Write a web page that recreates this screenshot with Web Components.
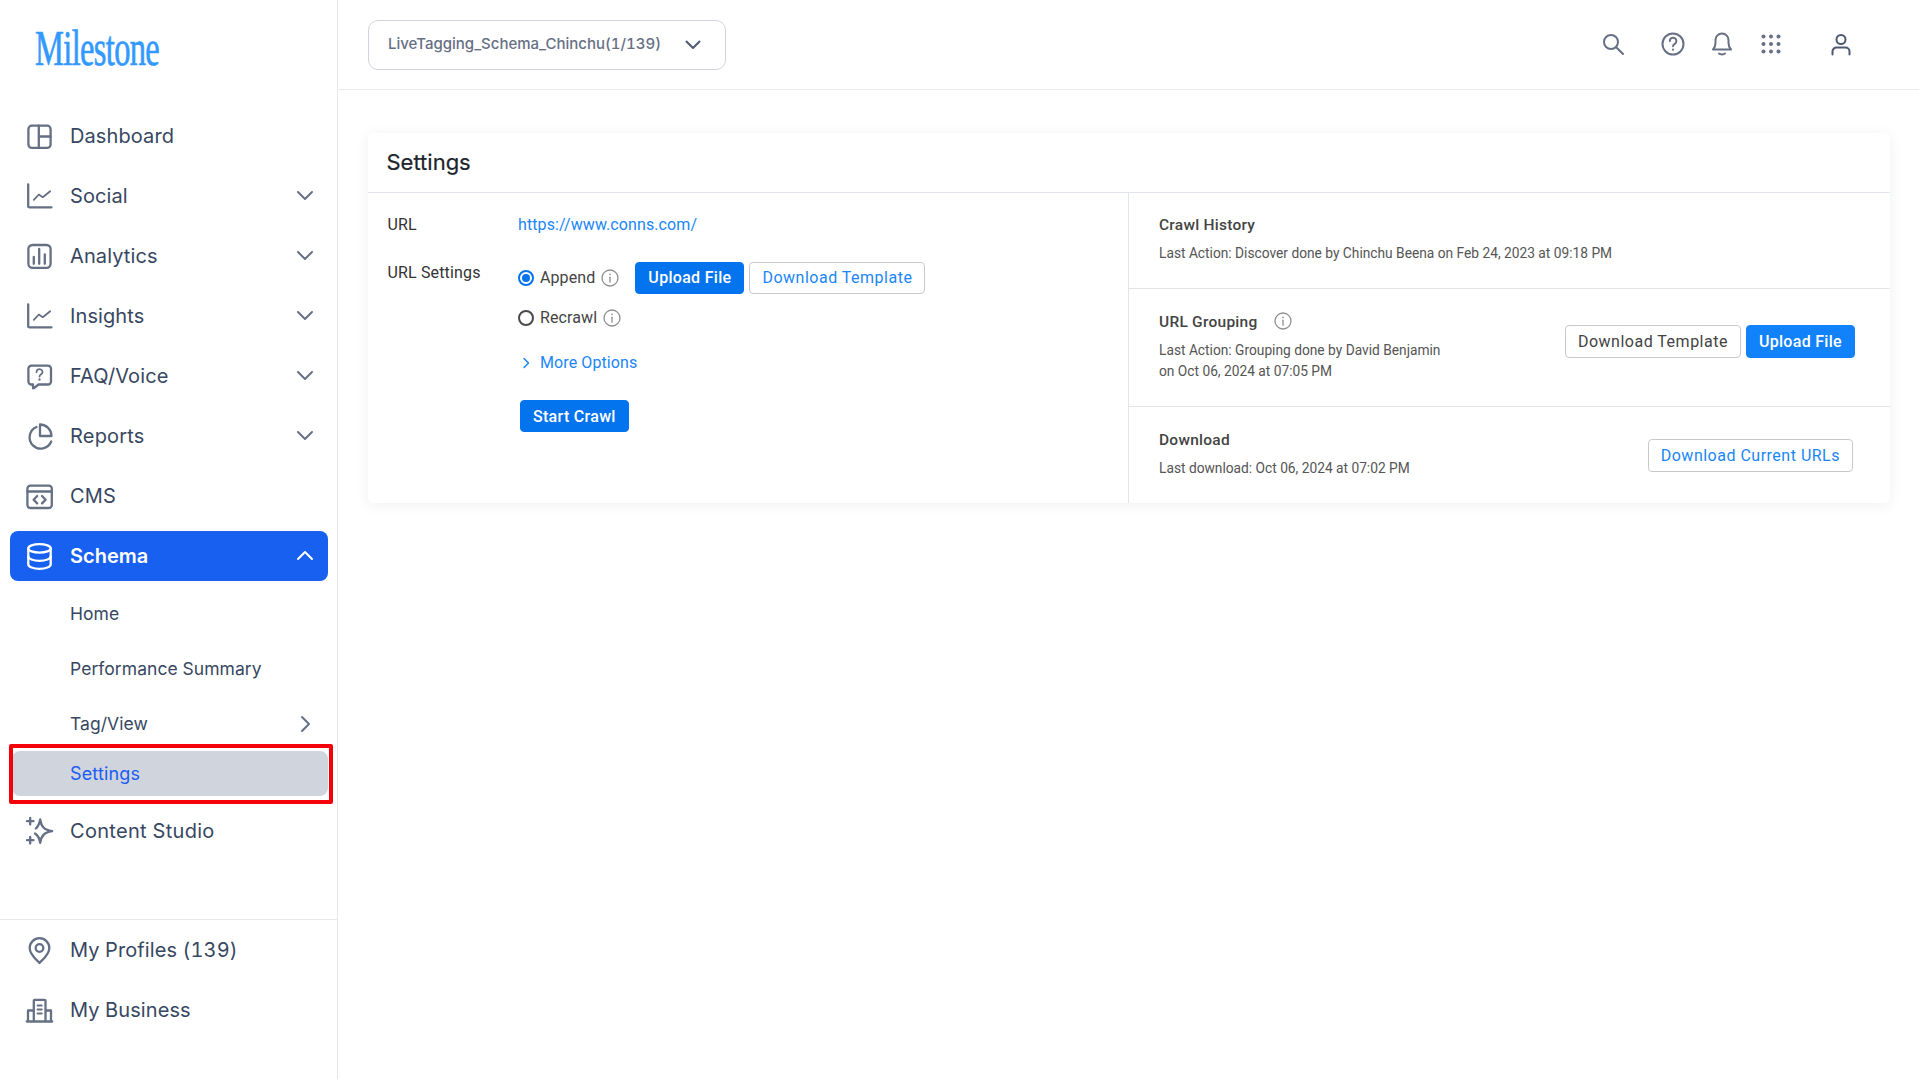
<!DOCTYPE html>
<html>
<head>
<meta charset="utf-8">
<title>Settings</title>
<style>
    html, body { margin: 0; height: 100%; background: #fff; }
    body { display: flex; height: 1079px; overflow: hidden; font-family: 'Inter', sans-serif; }
    app-main { flex: 1; min-width: 0; }
</style>
</head>
<body>
<app-sidebar></app-sidebar>
<app-main>
    <app-topbar></app-topbar>
    <settings-card></settings-card>
</app-main>

<script>
// icons used by the sidebar
const ICONS = {
    dashboard: '<rect x="2.400" y="2.700" width="22.200" height="22.200" rx="3.500"/><path d="M12.800 2.700v22.200M12.800 13.500h11.800"/>',
    chart: '<path d="M2.200 1.500v21.800a1 1 0 0 0 1 1h22.300"/><path stroke-width="1.800" d="M7.800 16.800l5-5.300 4 2.700 7.400-6"/>',
    bars: '<rect x="2.400" y="2" width="22.200" height="22.800" rx="4"/><path d="M7.800 20.800V14M13.200 20.800V5.800M18.800 20.800v-9.300"/>',
    faq: '<path d="M5.400 2.700h16.600a3 3 0 0 1 3 3v12.800a3 3 0 0 1-3 3H12.500l-4.500 3.700c-.5.400-1 .1-1-.4v-3.300H5.400a3 3 0 0 1-3-3V5.700a3 3 0 0 1 3-3z"/><path stroke-width="1.800" d="M10.500 9a3 2.800 0 1 1 4.600 2.300c-1 .7-1.600 1.200-1.600 2.300"/><path d="M13.500 16.500v.2"/>',
    reports: '<path d="M10.500 4A11.200 11.200 0 1 0 25.200 18.500"/><path d="M14 1.500A11.500 11.500 0 0 1 25.500 13H14z"/>',
    cms: '<rect x="1.400" y="2.600" width="24.400" height="22.400" rx="3"/><path d="M1.400 8.500h24.400M11.200 13l-3.600 3.700 3.600 3.700M16 13l3.600 3.700-3.600 3.700"/>',
    schema: '<ellipse cx="13.500" cy="5.400" rx="11.200" ry="4.200"/><path d="M2.300 5.400v16.100c0 2.400 5 4.300 11.200 4.300s11.200-1.900 11.200-4.300V5.400"/><path d="M2.300 13.500c0 2.400 5 4.300 11.200 4.300s11.200-1.900 11.200-4.300"/>',
    studio: '<path d="M14.200 1.500c1 7 3.800 10.500 12 11.700-8.200 1.200-11 4.700-12 11.600-.6-4.200-2-7.200-5.200-9.300M9.800 10.500c2.300-2 3.700-5 4.400-9"/><path d="M4.200 0v6.500M1 3.200h6.500M4.200 19v6.500M1 22.200h6.500"/>',
    pin: '<path d="M13.500 26C11 23 3.700 18 3.700 11a9.800 9.800 0 0 1 19.600 0c0 7-7.300 12-9.800 15z"/><circle cx="13.500" cy="11" r="3.800"/>',
    business: '<path d="M.8 24.500h25.400M2 24.500V13.500h5.800M25 24.500V13.500h-5.500M7.800 24.500V3.800a1 1 0 0 1 1-1h9.700a1 1 0 0 1 1 1v20.700"/><path stroke-width="1.800" d="M11.500 8.500h4.300M11.500 12.500h4.300M11.500 16.500h4.300"/>'
};

class NavItem extends HTMLElement {
    constructor() {
        super();
        this.attachShadow({ mode: 'open' });
        const icon = this.getAttribute('icon');
        const arrow = this.getAttribute('arrow');
        const arrows = { down: 'M2 5l7 7 7-7', up: 'M2 12l7-7 7 7', right: 'M6 2l7 7-7 7' };
        this.shadowRoot.innerHTML = `
            <style>
                :host {
                    display: flex;
                    align-items: center;
                    height: 50px;
                    margin: 0 9px 10px 10px;
                    padding-left: 16px;
                    padding-right: 14px;
                    border-radius: 8px;
                    font: 400 20px 'Inter', sans-serif;
                    font-variant-numeric: tabular-nums;
                    letter-spacing: .1px;
                    color: #374762;
                    position: relative;
                    box-sizing: border-box;
                }
                :host([active]) { background: #1760f0; color: #fff; font-weight: 600; letter-spacing: 0; }
                :host([sub]) { height: 45px; font-size: 17.500px; margin-bottom: 10px; letter-spacing: .05px; }
                :host([current]) { background: #cfd4dd; color: #1a5cf5; margin-left: 12px; margin-bottom: 10px; font-size: 18px; letter-spacing: .15px; }
                .icon { width: 27px; height: 27px; margin-right: 17px; flex: none; fill: none; stroke: #667085; stroke-width: 2.300; stroke-linecap: round; stroke-linejoin: round; overflow: visible; }
                :host([active]) .icon { stroke: #fff; }
                .spacer { width: 44px; flex: none; }
                :host([current]) .spacer { width: 42px; }
                .label { flex: 1; white-space: nowrap; }
                .arrow { width: 18px; height: 18px; fill: none; stroke: #667085; stroke-width: 2; stroke-linecap: round; stroke-linejoin: round; }
                :host([active]) .arrow { stroke: #fff; }
            </style>
            ${icon ? `<svg class="icon" viewBox="0 0 27 27">${ICONS[icon]}</svg>` : '<span class="spacer"></span>'}
            <span class="label"><slot></slot></span>
            ${arrow ? `<svg class="arrow" viewBox="0 0 18 18"><path d="${arrows[arrow]}"/></svg>` : ''}
        `;
    }
}

class RedOutline extends HTMLElement {
    constructor() {
        super();
        this.attachShadow({ mode: 'open' });
        this.shadowRoot.innerHTML = `
            <style>
                :host { display: block; position: relative; }
                .box { position: absolute; left: 9px; right: 4px; top: -7px; height: 60px; border: 4px solid #f40009; border-radius: 2px; box-sizing: border-box; pointer-events: none; }
            </style>
            <slot></slot>
            <div class="box"></div>
        `;
    }
}

class AppSidebar extends HTMLElement {
    constructor() {
        super();
        this.attachShadow({ mode: 'open' });
        this.shadowRoot.innerHTML = `
            <style>
                :host {
                    display: flex;
                    flex-direction: column;
                    flex: none;
                    width: 338px;
                    height: 1079px;
                    box-sizing: border-box;
                    border-right: 1px solid #e6e8ec;
                    background: #fff;
                }
                .logo { height: 111px; box-sizing: border-box; padding: 23px 0 0 35px; flex: none; }
                .logo span {
                    display: inline-block;
                    font: 400 50px 'Liberation Serif', serif;
                    color: #3399ff;
                    -webkit-text-stroke: .7px #3399ff;
                    line-height: 50px;
                    letter-spacing: -1px;
                    transform: scaleX(.65);
                    transform-origin: left center;
                    white-space: nowrap;
                }
                nav { flex: 1; }
                footer { flex: none; height: 160px; box-sizing: border-box; padding-top: 5px; border-top: 1px solid #e6e8ec; }
            </style>
            <div class="logo"><span>Milestone</span></div>
            <nav>
                <nav-item icon="dashboard">Dashboard</nav-item>
                <nav-item icon="chart" arrow="down">Social</nav-item>
                <nav-item icon="bars" arrow="down">Analytics</nav-item>
                <nav-item icon="chart" arrow="down">Insights</nav-item>
                <nav-item icon="faq" arrow="down">FAQ/Voice</nav-item>
                <nav-item icon="reports" arrow="down" style="letter-spacing:.2px">Reports</nav-item>
                <nav-item icon="cms">CMS</nav-item>
                <nav-item icon="schema" arrow="up" active>Schema</nav-item>
                <nav-item sub>Home</nav-item>
                <nav-item sub>Performance Summary</nav-item>
                <nav-item sub arrow="right" style="margin-bottom:5px">Tag/View</nav-item>
                <red-outline><nav-item sub current>Settings</nav-item></red-outline>
                <nav-item icon="studio" style="letter-spacing:.3px">Content Studio</nav-item>
            </nav>
            <footer>
                <nav-item icon="pin">My Profiles (139)</nav-item>
                <nav-item icon="business">My Business</nav-item>
            </footer>
        `;
    }
}

class AppMain extends HTMLElement {
    constructor() {
        super();
        this.attachShadow({ mode: 'open' });
        this.shadowRoot.innerHTML = `
            <style>
                :host { display: block; background: #fff; }
            </style>
            <slot></slot>
        `;
    }
}

class AppTopbar extends HTMLElement {
    constructor() {
        super();
        this.attachShadow({ mode: 'open' });
        this.shadowRoot.innerHTML = `
            <style>
                :host {
                    display: flex;
                    align-items: center;
                    height: 90px;
                    box-sizing: border-box;
                    border-bottom: 1px solid #e8e9ed;
                    padding: 0 0 0 30px;
                }
                .select {
                    display: flex;
                    align-items: center;
                    justify-content: space-between;
                    width: 358px;
                    height: 50px;
                    margin-top: 1px;
                    box-sizing: border-box;
                    border: 1px solid #d0d5dd;
                    border-radius: 10px;
                    padding: 0 24px 0 19px;
                    font: 500 15px 'Inter', sans-serif;
                    font-variant-numeric: tabular-nums;
                    letter-spacing: 0;
                    color: #667085;
                    white-space: nowrap;
                }
                .select span { position: relative; top: -2px; }
                .select svg { width: 16px; height: 16px; fill: none; stroke: #4e5a70; stroke-width: 2; stroke-linecap: round; stroke-linejoin: round; }
                .icons { display: flex; align-items: center; margin-left: auto; padding-right: 64px; margin-top: -1px; }
                .icons svg { width: 28px; height: 28px; fill: none; stroke: #667085; stroke-width: 2; stroke-linecap: round; stroke-linejoin: round; display: block; }
                .search { margin-right: 32px; }
                .help { margin-right: 21px; }
                .bell { margin-right: 21px; }
                .grid { margin-right: 42px; }
                .grid circle { fill: #667085; stroke: none; }
                .user { stroke: #4e5a70 !important; }
            </style>
            <div class="select">
                <span>LiveTagging_Schema_Chinchu(1/139)</span>
                <svg viewBox="0 0 16 16"><path d="M1.500 4.500l6.500 6.500 6.500-6.500"/></svg>
            </div>
            <div class="icons">
                <svg class="search" viewBox="0 0 28 28"><circle cx="12" cy="12" r="7"/><path d="M17.200 17.200l6.800 6.800"/></svg>
                <svg class="help" viewBox="0 0 28 28"><circle cx="14" cy="14" r="10.500"/><path d="M10.800 11a3.300 3.300 0 1 1 5 2.800c-1.200.8-1.800 1.300-1.800 2.400"/><path d="M14 19.500v.2"/></svg>
                <svg class="bell" viewBox="0 0 28 28"><path d="M5 19.500c1.500-1.500 2.500-3 2.500-6.500v-3a6.500 6.500 0 0 1 13 0v3c0 3.500 1 5 2.500 6.500z"/><path d="M11 23.500c1.500 1.200 4.500 1.200 6 0"/></svg>
                <svg class="grid" viewBox="0 0 28 28">
                    <circle cx="6.500" cy="6.500" r="2"/><circle cx="14" cy="6.500" r="2"/><circle cx="21.500" cy="6.500" r="2"/>
                    <circle cx="6.500" cy="14" r="2"/><circle cx="14" cy="14" r="2"/><circle cx="21.500" cy="14" r="2"/>
                    <circle cx="6.500" cy="21.500" r="2"/><circle cx="14" cy="21.500" r="2"/><circle cx="21.500" cy="21.500" r="2"/>
                </svg>
                <svg class="user" viewBox="0 0 28 28"><circle cx="14" cy="9.500" r="4.500"/><path d="M5.500 24.500v-3a4 4 0 0 1 4-4h9a4 4 0 0 1 4 4v3"/></svg>
            </div>
        `;
    }
}

class UiButton extends HTMLElement {
    constructor() {
        super();
        this.attachShadow({ mode: 'open' });
        this.shadowRoot.innerHTML = `
            <style>
                :host {
                    display: inline-flex;
                    align-items: center;
                    justify-content: center;
                    box-sizing: border-box;
                    height: 33px;
                    padding: 0 12px;
                    border: 1px solid #c9c9c9;
                    border-radius: 4px;
                    font: 400 16px 'Roboto', sans-serif;
                    letter-spacing: .5px;
                    color: #434343;
                    background: #fff;
                    white-space: nowrap;
                }
                :host([link]) { color: #1a86f7; }
                :host([primary]) { background: var(--primary, #1282fb); border-color: var(--primary, #1282fb); color: #fff; font-weight: 500; letter-spacing: .3px; }
            </style>
            <slot></slot>
        `;
    }
}

class InfoIcon extends HTMLElement {
    constructor() {
        super();
        this.attachShadow({ mode: 'open' });
        this.shadowRoot.innerHTML = `
            <style>
                :host { display: inline-flex; flex: none; width: 18px; height: 18px; }
                svg { width: 18px; height: 18px; fill: none; stroke: #8f8f8f; stroke-width: 1.300; stroke-linecap: round; }
            </style>
            <svg viewBox="0 0 18 18"><circle cx="9" cy="9" r="8"/><path d="M9 8.200v5"/><path d="M9 5.200v.3" stroke-width="1.600"/></svg>
        `;
    }
}

class RadioOption extends HTMLElement {
    constructor() {
        super();
        this.attachShadow({ mode: 'open' });
        this.shadowRoot.innerHTML = `
            <style>
                :host { display: inline-flex; align-items: center; font: 400 16px 'Roboto', sans-serif; letter-spacing: .1px; color: #444; }
                .dot { width: 16px; height: 16px; box-sizing: border-box; border: 2px solid #4a4a4a; border-radius: 50%; margin-right: 6px; flex: none; position: relative; }
                :host([checked]) .dot { border-color: #0473ee; }
                :host([checked]) .dot::after { content: ''; position: absolute; inset: 2px; border-radius: 50%; background: #0473ee; }
                info-icon { margin-left: 6px; }
            </style>
            <span class="dot"></span><slot></slot><info-icon></info-icon>
        `;
    }
}

class SideRow extends HTMLElement {
    constructor() {
        super();
        this.attachShadow({ mode: 'open' });
        this.shadowRoot.innerHTML = `
            <style>
                :host {
                    display: flex;
                    align-items: center;
                    justify-content: space-between;
                    box-sizing: border-box;
                    padding: 0 35px 0 30px;
                    border-bottom: 1px solid #e4e4e7;
                    font-family: 'Roboto', sans-serif;
                }
                :host(:last-child) { border-bottom: 0; }
                .text { position: relative; top: -1px; }
                .title { display: flex; align-items: center; font-size: 15.500px; font-weight: 500; letter-spacing: .25px; color: #444; line-height: 20px; }
                ::slotted(info-icon) { margin-left: 17px; margin-top: -2px; }
                .desc { font-size: 13.750px; color: #555; line-height: 21px; margin-top: 8px; }
                .actions { display: flex; gap: 5px; }
                :host([lift]) .actions { margin-top: -12px; }
                :host([nudge]) .actions { margin-right: 2px; }
            </style>
            <div class="text">
                <div class="title"><slot name="title"></slot></div>
                <div class="desc"><slot name="desc"></slot></div>
            </div>
            <div class="actions"><slot></slot></div>
        `;
    }
}

class SettingsCard extends HTMLElement {
    constructor() {
        super();
        this.attachShadow({ mode: 'open' });
        this.shadowRoot.innerHTML = `
            <style>
                :host {
                    display: block;
                    margin: 43px 29px 0 30px;
                    height: 370px;
                    background: #fff;
                    border-radius: 6px;
                    box-shadow: 0 2px 14px rgba(30, 40, 70, .07);
                    font-family: 'Roboto', sans-serif;
                }
                h2 {
                    margin: 0;
                    height: 60px;
                    box-sizing: border-box;
                    padding: 14px 0 0 19px;
                    border-bottom: 1px solid #e2e4ec;
                    font: 400 22px/30px 'Inter', sans-serif;
                    color: #20242c;
                    -webkit-text-stroke: .2px #20242c;
                    margin-left: -.5px;
                }
                .body { display: grid; grid-template-columns: 761px 1fr; height: 310px; }
                .left { --primary: #0473ee; border-right: 1px solid #e2e4ec; padding: 22px 0 0 19.500px; box-sizing: border-box; }
                .right { display: grid; grid-template-rows: 96px 118px 1fr; min-width: 0; }
                .row { display: grid; grid-template-columns: 130.500px 1fr; }
                .label { font-size: 16px; letter-spacing: .15px; color: #333; line-height: 20px; }
                a { font-size: 16px; letter-spacing: .1px; line-height: 20px; color: #1a86f7; text-decoration: none; }
                .settings { margin-top: 28px; }
                .line { display: flex; align-items: center; height: 35px; }
                .line radio-option { margin-right: 16px; }
                .line ui-button { height: 32px; }
                .line ui-button + ui-button { margin-left: 5px; }
                .recrawl { margin-top: 5px; }
                .more { display: flex; align-items: center; margin-top: 18px; height: 20px; padding-left: 3px; }
                .more svg { width: 10px; height: 12px; fill: none; stroke: #1a86f7; stroke-width: 1.500; stroke-linecap: round; stroke-linejoin: round; margin-right: 9px; }
                .start { margin: 27px 0 0 2px; height: 32px; }
                .start ui-button { height: 32px; }
            </style>
            <h2>Settings</h2>
            <div class="body">
                <div class="left">
                    <div class="row">
                        <div class="label">URL</div>
                        <a>https://www.conns.com/</a>
                    </div>
                    <div class="row settings">
                        <div class="label">URL Settings</div>
                        <div>
                            <div class="line" style="margin-top:-3px">
                                <radio-option checked>Append</radio-option>
                                <ui-button primary>Upload File</ui-button>
                                <ui-button link>Download Template</ui-button>
                            </div>
                            <div class="line recrawl">
                                <radio-option>Recrawl</radio-option>
                            </div>
                            <div class="more">
                                <svg viewBox="0 0 10 12"><path d="M3 1.500L7.500 6 3 10.500"/></svg>
                                <a>More Options</a>
                            </div>
                            <div class="start"><ui-button primary>Start Crawl</ui-button></div>
                        </div>
                    </div>
                </div>
                <div class="right">
                    <side-row>
                        <span slot="title">Crawl History</span>
                        <span slot="desc">Last Action: Discover done by Chinchu Beena on Feb 24, 2023 at 09:18 PM</span>
                    </side-row>
                    <side-row lift>
                        <span slot="title">URL Grouping</span><info-icon slot="title"></info-icon>
                        <span slot="desc">Last Action: Grouping done by David Benjamin<br>on Oct 06, 2024 at 07:05 PM</span>
                        <ui-button>Download Template</ui-button>
                        <ui-button primary>Upload File</ui-button>
                    </side-row>
                    <side-row nudge>
                        <span slot="title">Download</span>
                        <span slot="desc">Last download: Oct 06, 2024 at 07:02 PM</span>
                        <ui-button link>Download Current URLs</ui-button>
                    </side-row>
                </div>
            </div>
        `;
    }
}

// defining the custom elements
customElements.define('nav-item', NavItem);
customElements.define('red-outline', RedOutline);
customElements.define('app-sidebar', AppSidebar);
customElements.define('app-main', AppMain);
customElements.define('app-topbar', AppTopbar);
customElements.define('ui-button', UiButton);
customElements.define('info-icon', InfoIcon);
customElements.define('radio-option', RadioOption);
customElements.define('side-row', SideRow);
customElements.define('settings-card', SettingsCard);
</script>
</body>
</html>
